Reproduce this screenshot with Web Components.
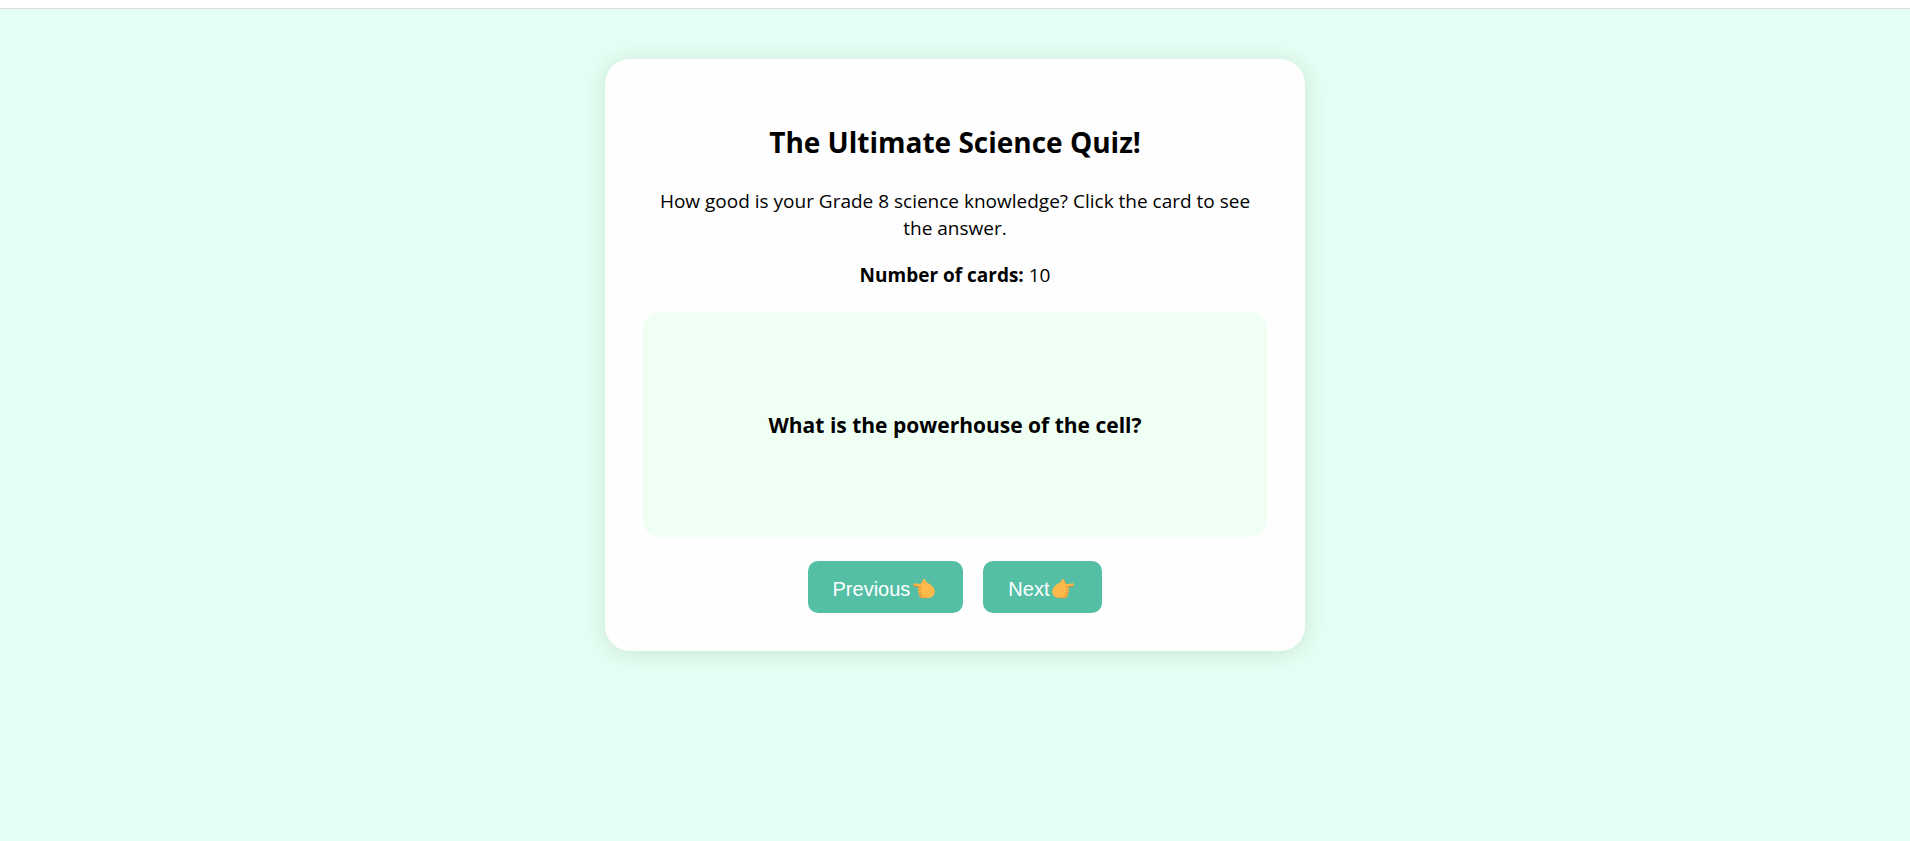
<!DOCTYPE html>
<html lang="en">
<head>
<meta charset="utf-8">
<meta name="viewport" content="width=device-width, initial-scale=1">
<title>The Ultimate Science Quiz!</title>
<style>
html, body { height: 100%; }
body { margin: 0; background: #e6fff4; font-family: "Segoe UI", "Open Sans", "Noto Sans", sans-serif; color: #000; }
</style>
</head>
<body>
<quiz-page>
  <quiz-panel>
    <span slot="title">The Ultimate Science Quiz!</span>
    <span slot="intro">How good is your Grade 8 science knowledge? Click the card to see the answer.</span>
    <span slot="count">10</span>
    <flash-card>What is the powerhouse of the cell?</flash-card>
    <nav-button slot="actions" direction="left">Previous</nav-button>
    <nav-button slot="actions" direction="right">Next</nav-button>
  </quiz-panel>
</quiz-page>
<script>
class BaseElement extends HTMLElement {
  constructor() {
    super();
    this.attachShadow({ mode: "open" }).innerHTML = this.constructor.markup;
  }
}

customElements.define("quiz-page", class extends BaseElement {
  static markup = `
    <style>
      :host { display: block; min-height: 100%; }
      header { height: 8px; background: #fff; border-bottom: 1px solid #d9dddb; }
      main { display: flex; justify-content: center; padding: 50px 20px; }
    </style>
    <header></header>
    <main><slot></slot></main>`;
});

customElements.define("quiz-panel", class extends BaseElement {
  static markup = `
    <style>
      :host {
        display: block; box-sizing: border-box; width: 100%; max-width: 700px;
        padding: 38px; border-radius: 25px; background: #fefefe;
        box-shadow: 0 2px 25px rgba(0, 50, 25, 0.13); text-align: center;
      }
      h1 { margin: 25px 0 26px; font-size: 28px; line-height: 40px; font-weight: 700; }
      p { margin: 0 0 20px; font-size: 19px; line-height: 27px; }
      .actions { display: flex; flex-wrap: wrap; justify-content: center; gap: 20px; margin-top: 24px; }
    </style>
    <h1><slot name="title"></slot></h1>
    <p><slot name="intro"></slot></p>
    <p><strong>Number of cards:</strong> <slot name="count"></slot></p>
    <slot></slot>
    <div class="actions"><slot name="actions"></slot></div>`;
});

customElements.define("flash-card", class extends BaseElement {
  static markup = `
    <style>
      :host { display: block; margin-top: 23px; }
      button {
        display: flex; align-items: center; justify-content: center;
        width: 100%; min-height: 225px; padding: 20px; border: 0; border-radius: 16px;
        background: #f0fff4; color: inherit;
        font-family: inherit; font-size: 21px; font-weight: 700; line-height: 30px; cursor: pointer;
      }
    </style>
    <button type="button"><slot></slot></button>`;
});

customElements.define("nav-button", class extends BaseElement {
  static markup = `
    <style>
      :host { display: block; }
      button {
        display: flex; align-items: center; height: 52px; padding: 4px 25px 0;
        border: 0; border-radius: 10px; background: #55bfa6; color: #fff;
        font-family: Arial, "Liberation Sans", sans-serif; font-size: 20px; line-height: 24px; cursor: pointer;
      }
      svg { display: block; width: 28px; height: 24px; }
      :host([direction="right"]) svg { transform: scaleX(-1); }
    </style>
    <button type="button"><slot></slot><svg viewBox="0 0 28 24" aria-hidden="true">
      <path fill="#fdb94a" d="M3.2 7.6C3.2 6.6 4.1 6.2 5.2 6.4L10.6 6.9L12.8 3.2C13.3 2.3 13.8 1.9 14.6 2.1C15.6 2.4 15.8 3.3 15.7 4.5L18.7 6.4C21 7.8 24.5 10.4 24.8 14C25 17.8 22.6 20.5 18.6 20.9H11.7C10 20.9 9.2 19.6 9.8 18.4C8.4 18 8.2 16.6 8.8 15.7C7.9 15.1 7.8 13.3 8.6 12.6C7.8 11.8 7.8 10.8 8.4 10L4.6 9.6C3.8 9.3 3.2 8.6 3.2 7.6Z"/>
      <path fill="none" stroke="#c8813b" stroke-width=".9" stroke-linecap="round" d="M3.8 8.9L8.2 9.8L11 10M8.8 12.8L10.8 13.2M9.2 15.9L11.2 16.3M10.2 18.7L11.8 19"/>
      <path fill="none" stroke="#df963d" stroke-width=".7" stroke-linecap="round" d="M11.2 6.4L13 3.4M10.6 20.5L12.7 20.8H18"/>
    </svg></button>`;
});
</script>
</body>
</html>
